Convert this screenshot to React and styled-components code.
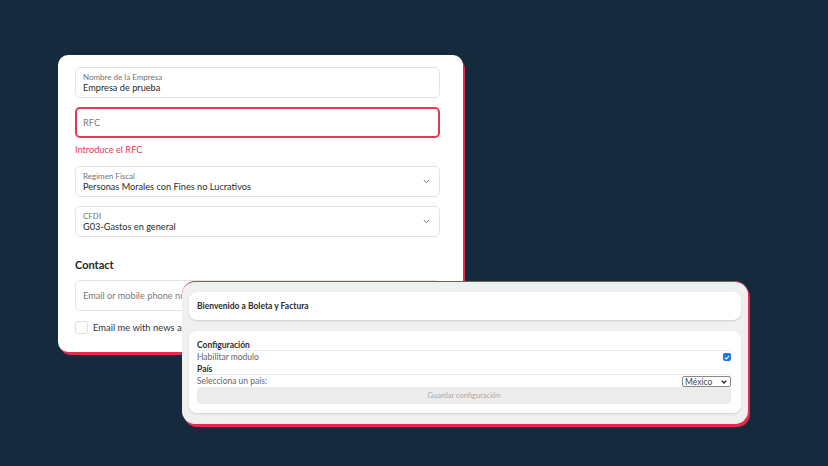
import React from "react";
import styled, { createGlobalStyle } from "styled-components";

const Global = createGlobalStyle`
  html, body {
    margin: 0;
    padding: 0;
    background: #152a3c;
    width: 828px;
    height: 466px;
    overflow: hidden;
  }
  * { box-sizing: border-box; }
`;

const Stage = styled.div`
  display: grid;
  width: 828px;
  height: 466px;
`;

// tarjeta del formulario
const FormCard = styled.div`
  grid-area: 1 / 1;
  align-self: start;
  justify-self: start;
  margin: 55px 0 0 58px;
  width: 405px;
  height: 297px;
  background: #fff;
  border-radius: 10px;
  box-shadow: 2px 3px 0 #e52a4d;
  padding: 12px 23px 0 17px;
  overflow: hidden;
  font-family: Lato, "Noto Sans", sans-serif;
  color: #333;
`;

const Field = styled.div`
  position: relative;
  height: 31px;
  border: ${(p) => (p.$error ? "2px solid #e23a52" : "1px solid #e3e3e3")};
  border-radius: 5px;
  padding: ${(p) => (p.$error ? "0 6px" : "0 7px")};
  margin-top: ${(p) => p.$mt || 0}px;
  display: flex;
  flex-direction: column;
  justify-content: center;
`;

const Label = styled.span`
  font-size: 8px;
  line-height: 10px;
  color: #737373;
`;

const Value = styled.span`
  font-size: 9.2px;
  line-height: 12px;
  color: #2a2a2a;
`;

const Placeholder = styled.span`
  font-size: 9.2px;
  color: #7a7a7a;
  white-space: nowrap;
`;

const Chevron = styled.svg`
  position: absolute;
  right: 9px;
  top: 12px;
`;

const ErrorText = styled.div`
  margin-top: 5px;
  font-size: 9.2px;
  line-height: 14px;
  color: #e23a52;
`;

const SectionTitle = styled.h2`
  margin: 20px 0 0;
  font-size: 11px;
  line-height: 16px;
  font-weight: 700;
  color: #262626;
`;

const CheckRow = styled.div`
  display: flex;
  align-items: center;
  gap: 5px;
  margin-top: 10px;
  font-size: 9.4px;
  color: #333;
  white-space: nowrap;
`;

const Box = styled.span`
  width: 13px;
  height: 13px;
  border: 1px solid #dedede;
  border-radius: 3px;
  background: #fff;
`;

// tarjeta de configuracion
const ConfigCard = styled.div`
  grid-area: 1 / 1;
  align-self: start;
  justify-self: start;
  position: relative;
  z-index: 2;
  margin: 281px 0 0 182px;
  width: 566px;
  height: 143px;
  background: #f0f0f0;
  border-radius: 13px;
  border-top: 1px solid #e52a4d;
  box-shadow: 2px 3px 0 #e52a4d;
  padding: 10px 7px 0 7px;
  font-family: Lato, "Noto Sans", sans-serif;
  display: flex;
  flex-direction: column;
  gap: 11px;
`;

const Panel = styled.div`
  background: #fff;
  border-radius: 8px;
  box-shadow: 0 1px 2px rgba(0, 0, 0, 0.14);
  padding: ${(p) => p.$pad};
`;

const Welcome = styled.div`
  font-size: 8.5px;
  font-weight: 700;
  color: #2b2b2b;
  line-height: 12px;
`;

const Row = styled.div`
  display: flex;
  align-items: center;
  justify-content: space-between;
  height: 12px;
  font-size: 8.5px;
  font-weight: ${(p) => (p.$bold ? 700 : 400)};
  color: ${(p) => (p.$bold ? "#2b2b2b" : "#666")};
  border-bottom: ${(p) => (p.$line ? "1px solid #ececec" : "none")};
`;

const Check = styled.span`
  width: 8px;
  height: 8px;
  border-radius: 2px;
  background: #1a73e8;
  display: flex;
  align-items: center;
  justify-content: center;
`;

const Select = styled.div`
  width: 49px;
  height: 11px;
  border: 1px solid #8a8a8a;
  border-radius: 2px;
  background: #fff;
  display: flex;
  align-items: center;
  justify-content: space-between;
  padding: 0 3px 0 2px;
  font-size: 8.5px;
  font-weight: 400;
  color: #444;
  margin-top: 1px;
`;

const SaveButton = styled.div`
  height: 17px;
  background: #ececec;
  border-radius: 4px;
  display: flex;
  align-items: center;
  justify-content: center;
  font-size: 7.5px;
  color: #a8a8a8;
`;

function Arrow() {
  return (
    <Chevron width="7" height="5" viewBox="0 0 7 5">
      <path d="M0.8 1 L3.5 3.6 L6.2 1" fill="none" stroke="#707070" strokeWidth="1" />
    </Chevron>
  );
}

export default function App() {
  return (
    <>
      <Global />
      <Stage>
        <FormCard>
          <Field>
            <Label>Nombre de la Empresa</Label>
            <Value>Empresa de prueba</Value>
          </Field>
          <Field $error $mt={9}>
            <Placeholder>RFC</Placeholder>
          </Field>
          <ErrorText>Introduce el RFC</ErrorText>
          <Field $mt={9}>
            <Label>Regimen Fiscal</Label>
            <Value>Personas Morales con Fines no Lucrativos</Value>
            <Arrow />
          </Field>
          <Field $mt={9}>
            <Label>CFDI</Label>
            <Value>G03-Gastos en general</Value>
            <Arrow />
          </Field>
          <SectionTitle>Contact</SectionTitle>
          <Field $mt={7}>
            <Placeholder>Email or mobile phone number</Placeholder>
          </Field>
          <CheckRow>
            <Box />
            Email me with news and offers
          </CheckRow>
        </FormCard>

        <ConfigCard>
          <Panel $pad="8px 8px">
            <Welcome>Bienvenido a Boleta y Factura</Welcome>
          </Panel>
          <Panel $pad="8px 10px 9px 8px">
            <Row $bold $line>Configuración</Row>
            <Row>
              Habilitar modulo
              <Check>
                <svg width="6" height="5" viewBox="0 0 6 5">
                  <path d="M0.8 2.6 L2.3 4 L5.2 0.8" fill="none" stroke="#fff" strokeWidth="1.1" />
                </svg>
              </Check>
            </Row>
            <Row $bold $line>País</Row>
            <Row>
              Selecciona un país:
              <Select>
                México
                <svg width="6" height="4" viewBox="0 0 6 4">
                  <path d="M0.6 0.6 L3 3 L5.4 0.6" fill="none" stroke="#222" strokeWidth="1.3" />
                </svg>
              </Select>
            </Row>
            <SaveButton>Guardar configuración</SaveButton>
          </Panel>
        </ConfigCard>
      </Stage>
    </>
  );
}
